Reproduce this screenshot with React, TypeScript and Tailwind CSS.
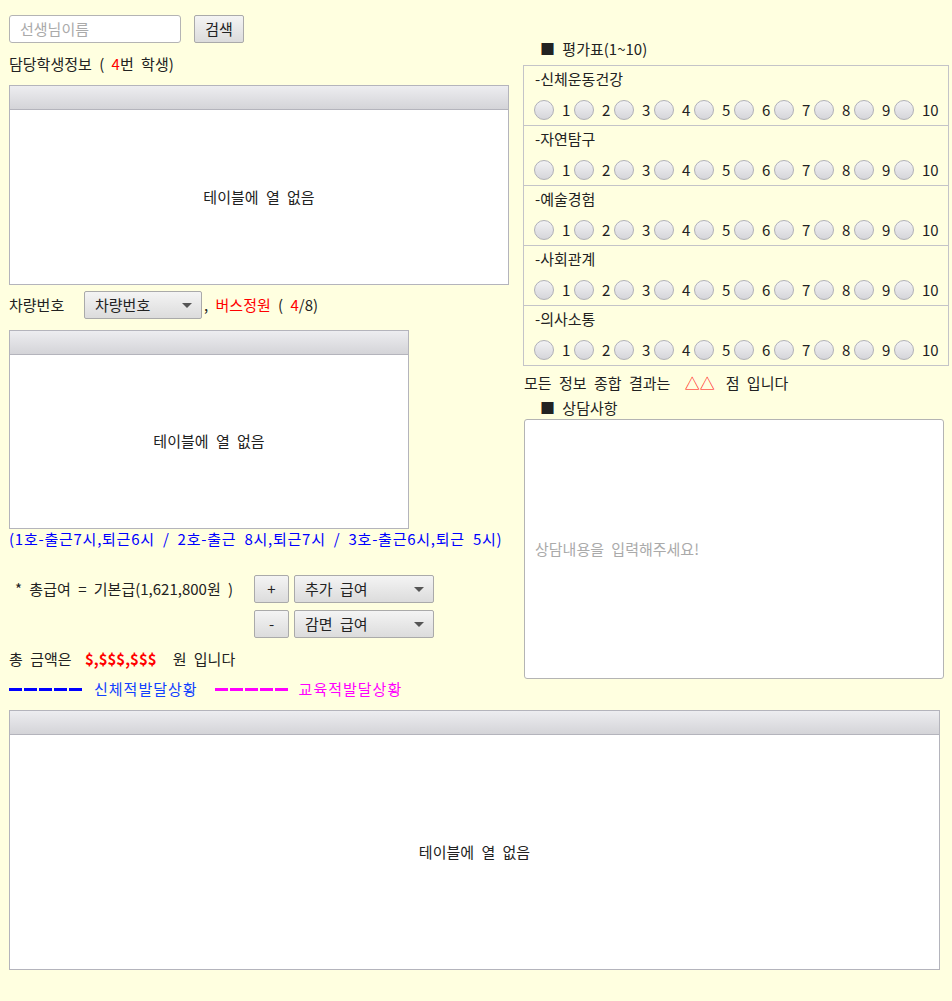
import React from 'react';

const font = { fontFamily: '"Noto Sans CJK KR", "Malgun Gothic", sans-serif' };

function Table({ className }: { className: string }) {
  return (
    <div className={`flex flex-col border border-[#b4b4bc] bg-white ${className}`}>
      <div className="h-[24px] shrink-0 border-b border-[#b4b4bc] bg-gradient-to-b from-[#ededf0] to-[#d4d4d8]" />
      <div className="flex flex-1 items-center justify-center text-[#222]">테이블에 열 없음</div>
    </div>
  );
}

function Select({ label, className }: { label: string; className: string }) {
  return (
    <div
      className={`flex h-[28px] items-center justify-between rounded-[2px] border border-[#aaa] bg-gradient-to-b from-[#f4f4f4] to-[#dcdcdc] pl-[10px] pr-[9px] text-[#222] ${className}`}
    >
      <span>{label}</span>
      <span className="h-0 w-0 border-x-[5px] border-t-[5px] border-x-transparent border-t-[#555]" />
    </div>
  );
}

function Btn({ label, className }: { label: string; className: string }) {
  return (
    <div
      className={`flex h-[28px] items-center justify-center rounded-[2px] border border-[#aaa] bg-gradient-to-b from-[#f4f4f4] to-[#dcdcdc] text-[#222] ${className}`}
    >
      {label}
    </div>
  );
}

const sections = ['-신체운동건강', '-자연탐구', '-예술경험', '-사회관계', '-의사소통'];

function RadioRow() {
  return (
    <div className="mt-[11px] flex h-[20px] items-center pl-[10px] [word-spacing:0]">
      {Array.from({ length: 10 }, (_, i) => (
        <div key={i} className="flex w-[40px] items-center">
          <span className="h-[20px] w-[20px] shrink-0 rounded-full border border-[#b0b0b8] bg-gradient-to-b from-[#f2f2f4] to-[#d6d6da]" />
          <span className="ml-[8px] leading-[20px] text-[#222]">{i + 1}</span>
        </div>
      ))}
    </div>
  );
}

export default function App() {
  return (
    <div className="min-h-[1001px] w-[952px] bg-[#ffffe0] text-[15px] text-[#222] [word-spacing:4px]" style={font}>
      <div className="flex">
        {/* left column */}
        <div className="ml-[9px] w-[500px] pt-[15px]">
          <div className="flex h-[28px] items-center">
            <div className="flex h-[28px] w-[172px] items-center rounded-[3px] border border-[#b4b4b4] bg-white pl-[10px] text-[#aaa]">
              선생님이름
            </div>
            <Btn label="검색" className="ml-[13px] h-[27px] w-[50px]" />
          </div>

          <div className="mt-[11px] h-[20px] leading-[20px]">
            담당학생정보 ( <span className="text-[#f00]">4</span>번 학생)
          </div>

          <Table className="mt-[11px] h-[200px] w-[500px]" />

          <div className="mt-[6px] flex h-[28px] items-center">
            <span className="w-[75px]">차량번호</span>
            <Select label="차량번호" className="w-[118px]" />
            <span className="ml-[2px]">
              , <span className="text-[#f00]">버스정원</span> ( <span className="text-[#f00]">4</span>/8)
            </span>
          </div>

          <Table className="mt-[11px] h-[199px] w-[400px]" />

          <div className="h-[20px] whitespace-nowrap leading-[20px] tracking-[0.75px] text-[#00f]">
            (1호-출근7시,퇴근6시 / 2호-출근 8시,퇴근7시 / 3호-출근6시,퇴근 5시)
          </div>

          <div className="mt-[26px] flex h-[28px] items-center">
            <span className="w-[245px] pl-[6px]">* 총급여 = 기본급(1,621,800원 )</span>
            <Btn label="+" className="w-[35px]" />
            <Select label="추가 급여" className="ml-[5px] w-[140px]" />
          </div>
          <div className="mt-[7px] flex h-[28px] items-center">
            <span className="w-[245px]" />
            <Btn label="-" className="w-[35px]" />
            <Select label="감면 급여" className="ml-[5px] w-[140px]" />
          </div>

          <div className="mt-[11px] h-[20px] leading-[20px]">
            총 금액은 <span className="ml-[6px] font-bold text-[#f00]">$,$$$,$$$</span>
            <span className="ml-[16px]">원 입니다</span>
          </div>

          <div className="mt-[10px] flex h-[20px] items-center">
            <div className="flex gap-[2px]">
              {[0, 1, 2, 3, 4].map((i) => (
                <span key={i} className="h-[3px] w-[13px] bg-[#00f]" />
              ))}
            </div>
            <span className="ml-[12px] tracking-[1px] text-[#1040ff]">신체적발달상황</span>
            <div className="ml-[17px] flex gap-[2px]">
              {[0, 1, 2, 3, 4].map((i) => (
                <span key={i} className="h-[3px] w-[13px] bg-[#f0f]" />
              ))}
            </div>
            <span className="ml-[11px] tracking-[1px] text-[#f0f]">교육적발달상황</span>
          </div>
        </div>

        {/* right column */}
        <div className="ml-[14px] w-[426px] pt-[39px]">
          <div className="h-[20px] pl-[17px] leading-[20px]">■ 평가표(1~10)</div>
          <div className="mt-[6px] border border-[#c4c4c8]">
            {sections.map((s, i) => (
              <div key={s} className={`pt-[3px] pb-[5px] ${i < sections.length - 1 ? 'border-b border-[#c4c4c8]' : ''}`}>
                <div className="h-[20px] pl-[11px] leading-[20px]">{s}</div>
                <RadioRow />
              </div>
            ))}
          </div>

          <div className="mt-[7px] h-[20px] pl-[1px] leading-[20px]">
            모든 정보 종합 결과는 <span className="ml-[7px] text-[#f00]">△△</span>
            <span className="ml-[11px]">점 입니다</span>
          </div>
          <div className="mt-[5px] h-[20px] pl-[17px] leading-[20px]">■ 상담사항</div>
          <div className="ml-[1px] mt-[1px] flex h-[260px] w-[420px] items-center rounded-[3px] border border-[#b4b4b4] bg-white pl-[10px] text-[#aaa]">
            상담내용을 입력해주세요!
          </div>
        </div>
      </div>

      <Table className="ml-[9px] mt-[11px] h-[260px] w-[931px]" />
    </div>
  );
}
